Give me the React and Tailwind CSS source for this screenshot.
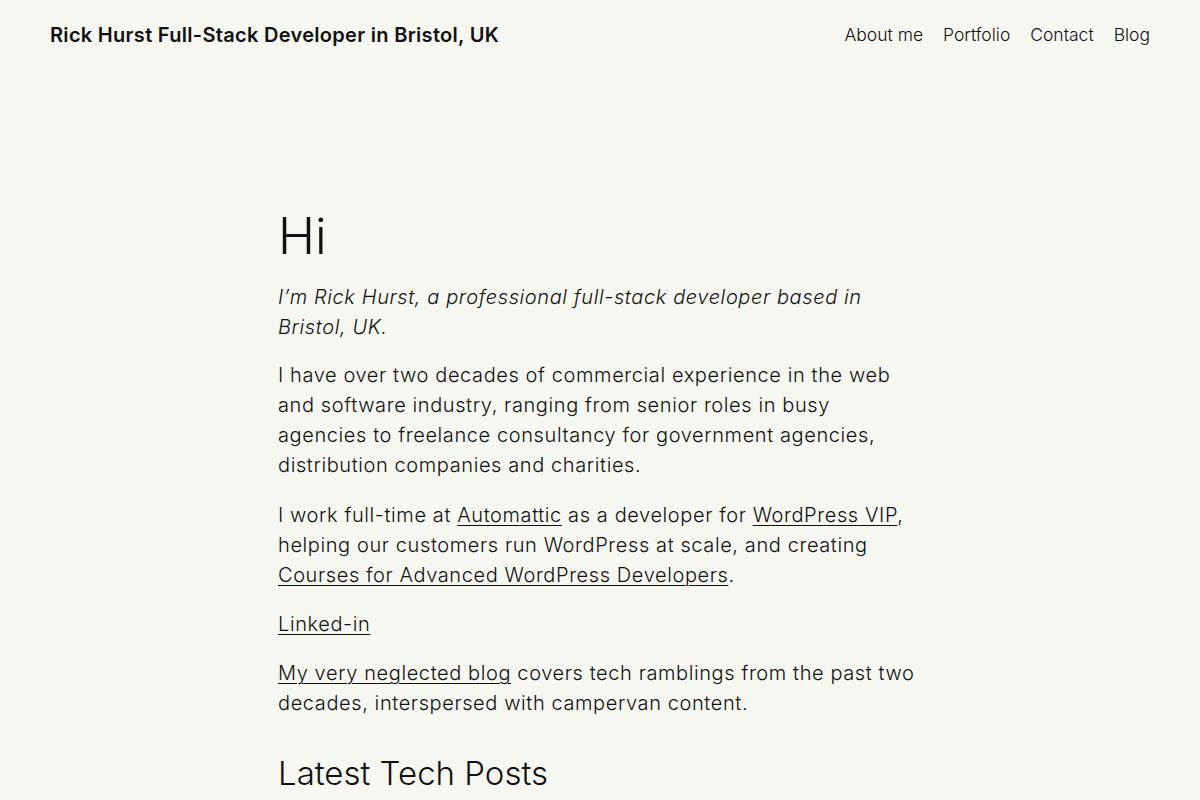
import React from "react";

const navItems = ["About me", "Portfolio", "Contact", "Blog"];

const A = ({ children }) => (
  <a href="#" className="underline underline-offset-[3px] decoration-1">
    {children}
  </a>
);

const App = () => {
  return (
    <div className="min-h-screen bg-[#f7f7f2] text-[#111111] font-['Inter',sans-serif]">
      <header className="flex items-center justify-between px-[50px] pt-[20px] pb-[20px]">
        <a href="#" className="text-[20px] font-semibold tracking-[0.3px]">
          Rick Hurst Full-Stack Developer in Bristol, UK
        </a>
        <nav className="flex gap-[20px] text-[17.5px] font-light">
          {navItems.map((item) => (
            <a key={item} href="#">
              {item}
            </a>
          ))}
        </nav>
      </header>

      <div className="pr-[4px]">
        <main className="mx-auto w-[640px] pt-[136px] text-[20px] font-light leading-[30px] tracking-[0.6px]">
          <h1 className="text-[50px] font-light leading-[1.2] mb-[16px] tracking-normal">Hi</h1>
          <p className="italic mb-[18px]">
            I’m Rick Hurst, a professional full-stack developer based in Bristol, UK.
          </p>
          <p className="mb-[20px]">
            I have over two decades of commercial experience in the web and software industry,
            ranging from senior roles in busy agencies to freelance consultancy for government
            agencies, distribution companies and charities.
          </p>
          <p className="mb-[19px]">
            I work full-time at <A>Automattic</A> as a developer for <A>WordPress VIP</A>, helping
            our customers run WordPress at scale, and creating{" "}
            <A>Courses for Advanced WordPress Developers</A>.
          </p>
          <p className="mb-[19px]">
            <A>Linked-in</A>
          </p>
          <p className="mb-[36px]">
            <A>My very neglected blog</A> covers tech ramblings from the past two decades,
            interspersed with campervan content.
          </p>
          <h2 className="text-[33px] font-light leading-[1.2] tracking-normal">Latest Tech Posts</h2>
        </main>
      </div>
    </div>
  );
};

export default App;
